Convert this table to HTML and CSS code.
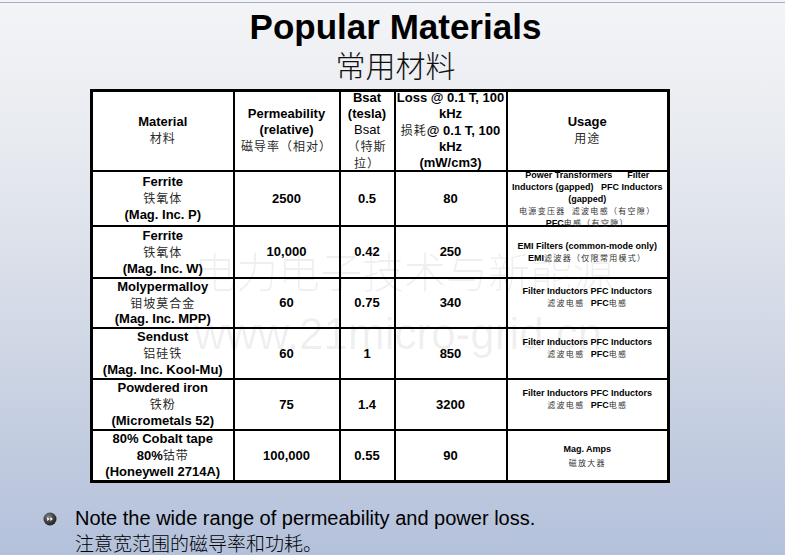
FILE: index.html
```html
<!DOCTYPE html>
<html lang="zh-CN">
<head>
<meta charset="utf-8">
<title>Popular Materials</title>
<link rel="stylesheet" href="styles.css">
</head>
<body>
<div class="slide">
  <div class="topline"></div>
  <h1 class="title">Popular Materials</h1>
  <div class="subtitle">常用材料</div>

  <div class="table-wrap">
    <table class="materials">
      <colgroup>
        <col class="c-mat"><col class="c-perm"><col class="c-bsat"><col class="c-loss"><col class="c-use">
      </colgroup>
      <thead>
        <tr class="r-head">
          <th><strong>Material</strong><br><span class="zh">材料</span></th>
          <th><strong>Permeability<br>(relative)</strong><br><span class="zh">磁导率（相对）</span></th>
          <th><div class="fit fit-head"><div><strong>Bsat<br>(tesla)</strong><br>Bsat<br><span class="zh">（特斯<br>拉）</span></div></div></th>
          <th><div class="fit fit-head"><div><strong>Loss @ 0.1 T, 100<br>kHz</strong><br><span class="zh">损耗</span><strong>@ 0.1 T, 100<br>kHz<br>(mW/cm3)</strong></div></div></th>
          <th><strong>Usage</strong><br><span class="zh">用途</span></th>
        </tr>
      </thead>
      <tbody>
        <tr class="r1">
          <td class="mat"><strong>Ferrite</strong><br><span class="zh">铁氧体</span><br><strong>(Mag. Inc. P)</strong></td>
          <td class="num">2500</td>
          <td class="num">0.5</td>
          <td class="num">80</td>
          <td class="use"><div class="fit fit-r1"><div><strong>Power Transformers&nbsp;&nbsp;&nbsp;&nbsp;&nbsp;&nbsp;Filter<br>Inductors (gapped)&nbsp;&nbsp;&nbsp;PFC Inductors<br>(gapped)</strong><br><span class="zs">电源变压器&nbsp;&nbsp;滤波电感（有空隙）</span><br><strong>PFC</strong><span class="zs">电感（有空隙）</span></div></div></td>
        </tr>
        <tr class="r2">
          <td class="mat"><strong>Ferrite</strong><br><span class="zh">铁氧体</span><br><strong>(Mag. Inc. W)</strong></td>
          <td class="num">10,000</td>
          <td class="num">0.42</td>
          <td class="num">250</td>
          <td class="use"><strong>EMI Filters (common-mode only)</strong><br><strong>EMI</strong><span class="zs">滤波器（仅限常用模式）</span></td>
        </tr>
        <tr class="r3">
          <td class="mat"><strong>Molypermalloy</strong><br><span class="zh">钼坡莫合金</span><br><strong>(Mag. Inc. MPP)</strong></td>
          <td class="num">60</td>
          <td class="num">0.75</td>
          <td class="num">340</td>
          <td class="use up"><strong>Filter Inductors PFC Inductors</strong><br><span class="zs">滤波电感&nbsp;&nbsp;</span><strong>PFC</strong><span class="zs">电感</span></td>
        </tr>
        <tr class="r4">
          <td class="mat"><strong>Sendust</strong><br><span class="zh">铝硅铁</span><br><strong>(Mag. Inc. Kool-Mu)</strong></td>
          <td class="num">60</td>
          <td class="num">1</td>
          <td class="num">850</td>
          <td class="use up"><strong>Filter Inductors PFC Inductors</strong><br><span class="zs">滤波电感&nbsp;&nbsp;</span><strong>PFC</strong><span class="zs">电感</span></td>
        </tr>
        <tr class="r5">
          <td class="mat"><strong>Powdered iron</strong><br><span class="zh">铁粉</span><br><strong>(Micrometals 52)</strong></td>
          <td class="num">75</td>
          <td class="num">1.4</td>
          <td class="num">3200</td>
          <td class="use up"><strong>Filter Inductors PFC Inductors</strong><br><span class="zs">滤波电感&nbsp;&nbsp;</span><strong>PFC</strong><span class="zs">电感</span></td>
        </tr>
        <tr class="r6">
          <td class="mat"><strong>80% Cobalt tape</strong><br><strong>80%</strong><span class="zh">钴带</span><br><strong>(Honeywell 2714A)</strong></td>
          <td class="num">100,000</td>
          <td class="num">0.55</td>
          <td class="num">90</td>
          <td class="use amps"><strong>Mag. Amps</strong><br><span class="zs">磁放大器</span></td>
        </tr>
      </tbody>
    </table>
    <div class="watermark" aria-hidden="true">
      <div class="wm-zh">电力电子技术与新能源</div>
      <div class="wm-en">www.21micro-grid.cn</div>
    </div>
  </div>

  <div class="note">
    <svg class="bullet" width="14" height="14" viewBox="0 0 14 14" aria-hidden="true">
      <defs>
        <radialGradient id="bg" cx="40%" cy="35%" r="70%">
          <stop offset="0" stop-color="#8a8a8a"/>
          <stop offset="0.6" stop-color="#3c3c3c"/>
          <stop offset="1" stop-color="#1e1e1e"/>
        </radialGradient>
      </defs>
      <circle cx="7" cy="7" r="6.5" fill="url(#bg)"/>
      <path d="M4.2 5 L6.6 7 L4.2 9 Z M7.4 5 L9.8 7 L7.4 9 Z" fill="#ffffff"/>
    </svg>
    <div class="note-text">
      <div class="note-en">Note the wide range of permeability and power loss.</div>
      <div class="note-zh">注意宽范围的磁导率和功耗。</div>
    </div>
  </div>
</div>
</body>
</html>
```

FILE: styles.css
```css
html, body {
  margin: 0;
  padding: 0;
}

body {
  width: 785px;
  height: 555px;
  overflow: hidden;
  font-family: "Liberation Sans", Arial, sans-serif;
  color: #000;
  background: linear-gradient(180deg, #f3f4f7 0%, #e8ebf0 25%, #d5dbe7 55%, #c2cce0 80%, #b4c1db 100%);
}

.slide {
  display: flex;
  flex-direction: column;
  height: 555px;
}

.topline {
  height: 1px;
  margin-top: 2px;
  background: #a6afc4;
}

.title {
  margin: 6px 0 0 0;
  padding-left: 6px;
  text-align: center;
  font-size: 35px;
  line-height: 35px;
  font-weight: bold;
}

.subtitle {
  margin-top: 3px;
  padding-left: 6px;
  text-align: center;
  font-family: "Noto Sans CJK SC", sans-serif;
  font-weight: 300;
  font-size: 30px;
  line-height: 34px;
  color: #111;
}

.table-wrap {
  position: relative;
  margin-top: 8px;
  margin-left: 90px;
  width: 577px;
}

.materials {
  border-collapse: collapse;
  table-layout: fixed;
  width: 577px;
  background: #fff;
  border: 3px solid #000;
}

.c-mat { width: 142px; }
.c-perm { width: 106px; }
.c-bsat { width: 55px; }
.c-loss { width: 112px; }
.c-use { width: 162px; }

.materials th,
.materials td {
  border: 2px solid #000;
  padding: 0;
  text-align: center;
  vertical-align: middle;
  font-size: 13px;
  line-height: 16px;
  font-weight: normal;
  white-space: nowrap;
}

.r-head { height: 81px; }
.r1 { height: 55px; }
.r2 { height: 52px; }
.r3 { height: 50px; }
.r4 { height: 51px; }
.r5 { height: 51px; }
.r6 { height: 51px; }

.materials .r3 td.mat { line-height: 15.5px; }

.fit {
  display: flex;
  flex-direction: column;
  justify-content: center;
  align-items: center;
  overflow: visible;
}

.fit-head { height: 76px; }
.fit-r1 { height: 50px; }

.zh {
  font-family: "Noto Sans CJK SC", sans-serif;
  font-size: 12px;
  letter-spacing: 1px;
  color: #2a2a2a;
}

.materials td.num {
  font-weight: bold;
  font-size: 13px;
}

.materials td.use {
  font-size: 9px;
  line-height: 12px;
}

.materials td.use.up {
  padding-bottom: 12px;
}

.materials td.use.amps {
  line-height: 14px;
}

.zs {
  font-family: "Noto Sans CJK SC", sans-serif;
  font-size: 8px;
  letter-spacing: 1.3px;
  color: #333;
}

.watermark {
  position: absolute;
  left: 104px;
  top: 158px;
  pointer-events: none;
  color: rgba(0, 0, 0, 0.065);
  white-space: nowrap;
}

.wm-zh {
  font-family: "Noto Sans CJK SC", sans-serif;
  font-weight: 300;
  font-size: 42px;
  line-height: 46px;
}

.wm-en {
  margin-top: 19px;
  font-size: 44px;
  line-height: 44px;
}

.note {
  display: flex;
  align-items: flex-start;
  margin-top: 22px;
  margin-left: 43px;
}

.bullet {
  flex: none;
  margin-top: 7px;
  margin-right: 18px;
}

.note-en {
  font-size: 20px;
  line-height: 26px;
}

.note-zh {
  font-family: "Noto Sans CJK SC", sans-serif;
  font-weight: 300;
  font-size: 19px;
  line-height: 24px;
}
```
